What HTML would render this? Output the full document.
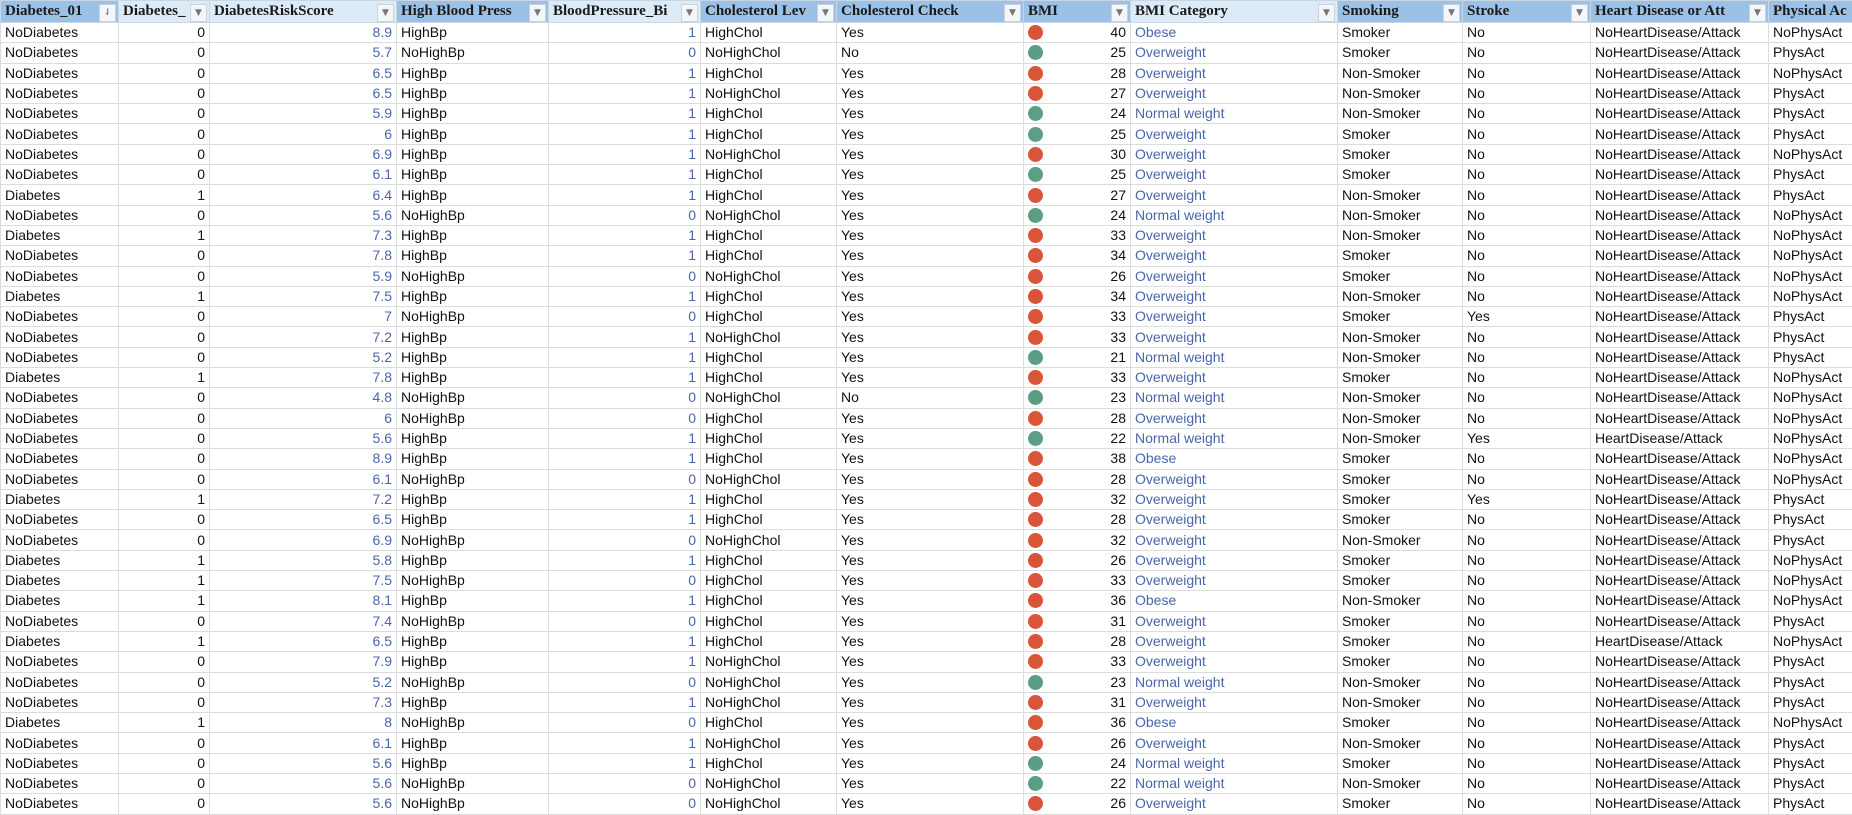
<!DOCTYPE html>
<html><head><meta charset="utf-8"><style>
body{margin:0;width:1852px;height:815px;overflow:hidden;background:#fff;font-family:"Liberation Sans",sans-serif;}
table{border-collapse:collapse;table-layout:fixed;width:1852px;}
td,th{border:1px solid #dcdcdc;height:19.3px;padding:0 4px;white-space:nowrap;overflow:hidden;font-size:14px;line-height:19px;color:#111;}
th{height:21px;background:#9bc2e6;font-family:"Liberation Serif",serif;font-weight:bold;font-size:15px;text-align:left;position:relative;padding-right:20px;color:#1a1a1a;border-color:#c8d6e6;}
th.l{background:#ddebf7;}
th i{position:absolute;right:2px;top:3px;width:15px;height:16px;background:#f4f6f9;border:1px solid #c9d3de;font-style:normal;font-size:9px;color:#777;text-align:center;line-height:16px;font-family:"DejaVu Sans",sans-serif;}
.r{text-align:right;}
.b{color:#4a66a8;}
.dot{display:inline-block;width:15px;height:15px;border-radius:50%;vertical-align:middle;float:left;margin-top:2px;}
.R{background:#d8553a;}.G{background:#5c9e83;}
</style></head><body>
<table id="t">
<colgroup><col style="width:118px"><col style="width:91px"><col style="width:187px"><col style="width:152px"><col style="width:152px"><col style="width:136px"><col style="width:187px"><col style="width:107px"><col style="width:207px"><col style="width:125px"><col style="width:128px"><col style="width:178px"><col style="width:84px"></colgroup>
<tr><th>Diabetes_01<i>⇃</i></th><th class="l">Diabetes_<i>▼</i></th><th class="l">DiabetesRiskScore<i>▼</i></th><th>High Blood Press<i>▼</i></th><th class="l">BloodPressure_Bi<i>▼</i></th><th>Cholesterol Lev<i>▼</i></th><th>Cholesterol Check<i>▼</i></th><th>BMI<i>▼</i></th><th class="l">BMI Category<i>▼</i></th><th>Smoking<i>▼</i></th><th>Stroke<i>▼</i></th><th>Heart Disease or Att<i>▼</i></th><th>Physical Ac</th></tr>
</table>
<script>
var d=`N 0 8.9 H 1 HighChol Yes R 40 O S No 0 N
N 0 5.7 NH 0 NoHighChol No G 25 W S No 0 P
N 0 6.5 H 1 HighChol Yes R 28 W NS No 0 N
N 0 6.5 H 1 NoHighChol Yes R 27 W NS No 0 P
N 0 5.9 H 1 HighChol Yes G 24 NW NS No 0 P
N 0 6 H 1 HighChol Yes G 25 W S No 0 P
N 0 6.9 H 1 NoHighChol Yes R 30 W S No 0 N
N 0 6.1 H 1 HighChol Yes G 25 W S No 0 P
D 1 6.4 H 1 HighChol Yes R 27 W NS No 0 P
N 0 5.6 NH 0 NoHighChol Yes G 24 NW NS No 0 N
D 1 7.3 H 1 HighChol Yes R 33 W NS No 0 N
N 0 7.8 H 1 HighChol Yes R 34 W S No 0 N
N 0 5.9 NH 0 NoHighChol Yes R 26 W S No 0 N
D 1 7.5 H 1 HighChol Yes R 34 W NS No 0 N
N 0 7 NH 0 HighChol Yes R 33 W S Yes 0 P
N 0 7.2 H 1 NoHighChol Yes R 33 W NS No 0 P
N 0 5.2 H 1 HighChol Yes G 21 NW NS No 0 P
D 1 7.8 H 1 HighChol Yes R 33 W S No 0 N
N 0 4.8 NH 0 NoHighChol No G 23 NW NS No 0 N
N 0 6 NH 0 HighChol Yes R 28 W NS No 0 N
N 0 5.6 H 1 HighChol Yes G 22 NW NS Yes 1 N
N 0 8.9 H 1 HighChol Yes R 38 O S No 0 N
N 0 6.1 NH 0 NoHighChol Yes R 28 W S No 0 N
D 1 7.2 H 1 HighChol Yes R 32 W S Yes 0 P
N 0 6.5 H 1 HighChol Yes R 28 W S No 0 P
N 0 6.9 NH 0 NoHighChol Yes R 32 W NS No 0 P
D 1 5.8 H 1 HighChol Yes R 26 W S No 0 N
D 1 7.5 NH 0 HighChol Yes R 33 W S No 0 N
D 1 8.1 H 1 HighChol Yes R 36 O NS No 0 N
N 0 7.4 NH 0 HighChol Yes R 31 W S No 0 P
D 1 6.5 H 1 HighChol Yes R 28 W S No 1 N
N 0 7.9 H 1 NoHighChol Yes R 33 W S No 0 P
N 0 5.2 NH 0 NoHighChol Yes G 23 NW NS No 0 P
N 0 7.3 H 1 NoHighChol Yes R 31 W NS No 0 P
D 1 8 NH 0 HighChol Yes R 36 O S No 0 N
N 0 6.1 H 1 NoHighChol Yes R 26 W NS No 0 P
N 0 5.6 H 1 HighChol Yes G 24 NW S No 0 P
N 0 5.6 NH 0 NoHighChol Yes G 22 NW NS No 0 P
N 0 5.6 NH 0 NoHighChol Yes R 26 W S No 0 P`;
var cat={O:"Obese",W:"Overweight",NW:"Normal weight"},h="";
d.split("\n").forEach(function(l){var a=l.trim().split(" ");
h+="<tr><td>"+(a[0]=="D"?"Diabetes":"NoDiabetes")+"</td><td class='r'>"+a[1]+"</td><td class='r b'>"+a[2]+"</td><td>"+(a[3]=="H"?"HighBp":"NoHighBp")+"</td><td class='r b'>"+a[4]+"</td><td>"+a[5]+"</td><td>"+a[6]+"</td><td class='r'><span class='dot "+a[7]+"'></span>"+a[8]+"</td><td class='b'>"+cat[a[9]]+"</td><td>"+(a[10]=="S"?"Smoker":"Non-Smoker")+"</td><td>"+a[11]+"</td><td>"+(a[12]=="1"?"HeartDisease/Attack":"NoHeartDisease/Attack")+"</td><td>"+(a[13]=="N"?"NoPhysAct":"PhysAct")+"</td></tr>";});
document.getElementById("t").insertAdjacentHTML("beforeend",h);
</script>
</body></html>
